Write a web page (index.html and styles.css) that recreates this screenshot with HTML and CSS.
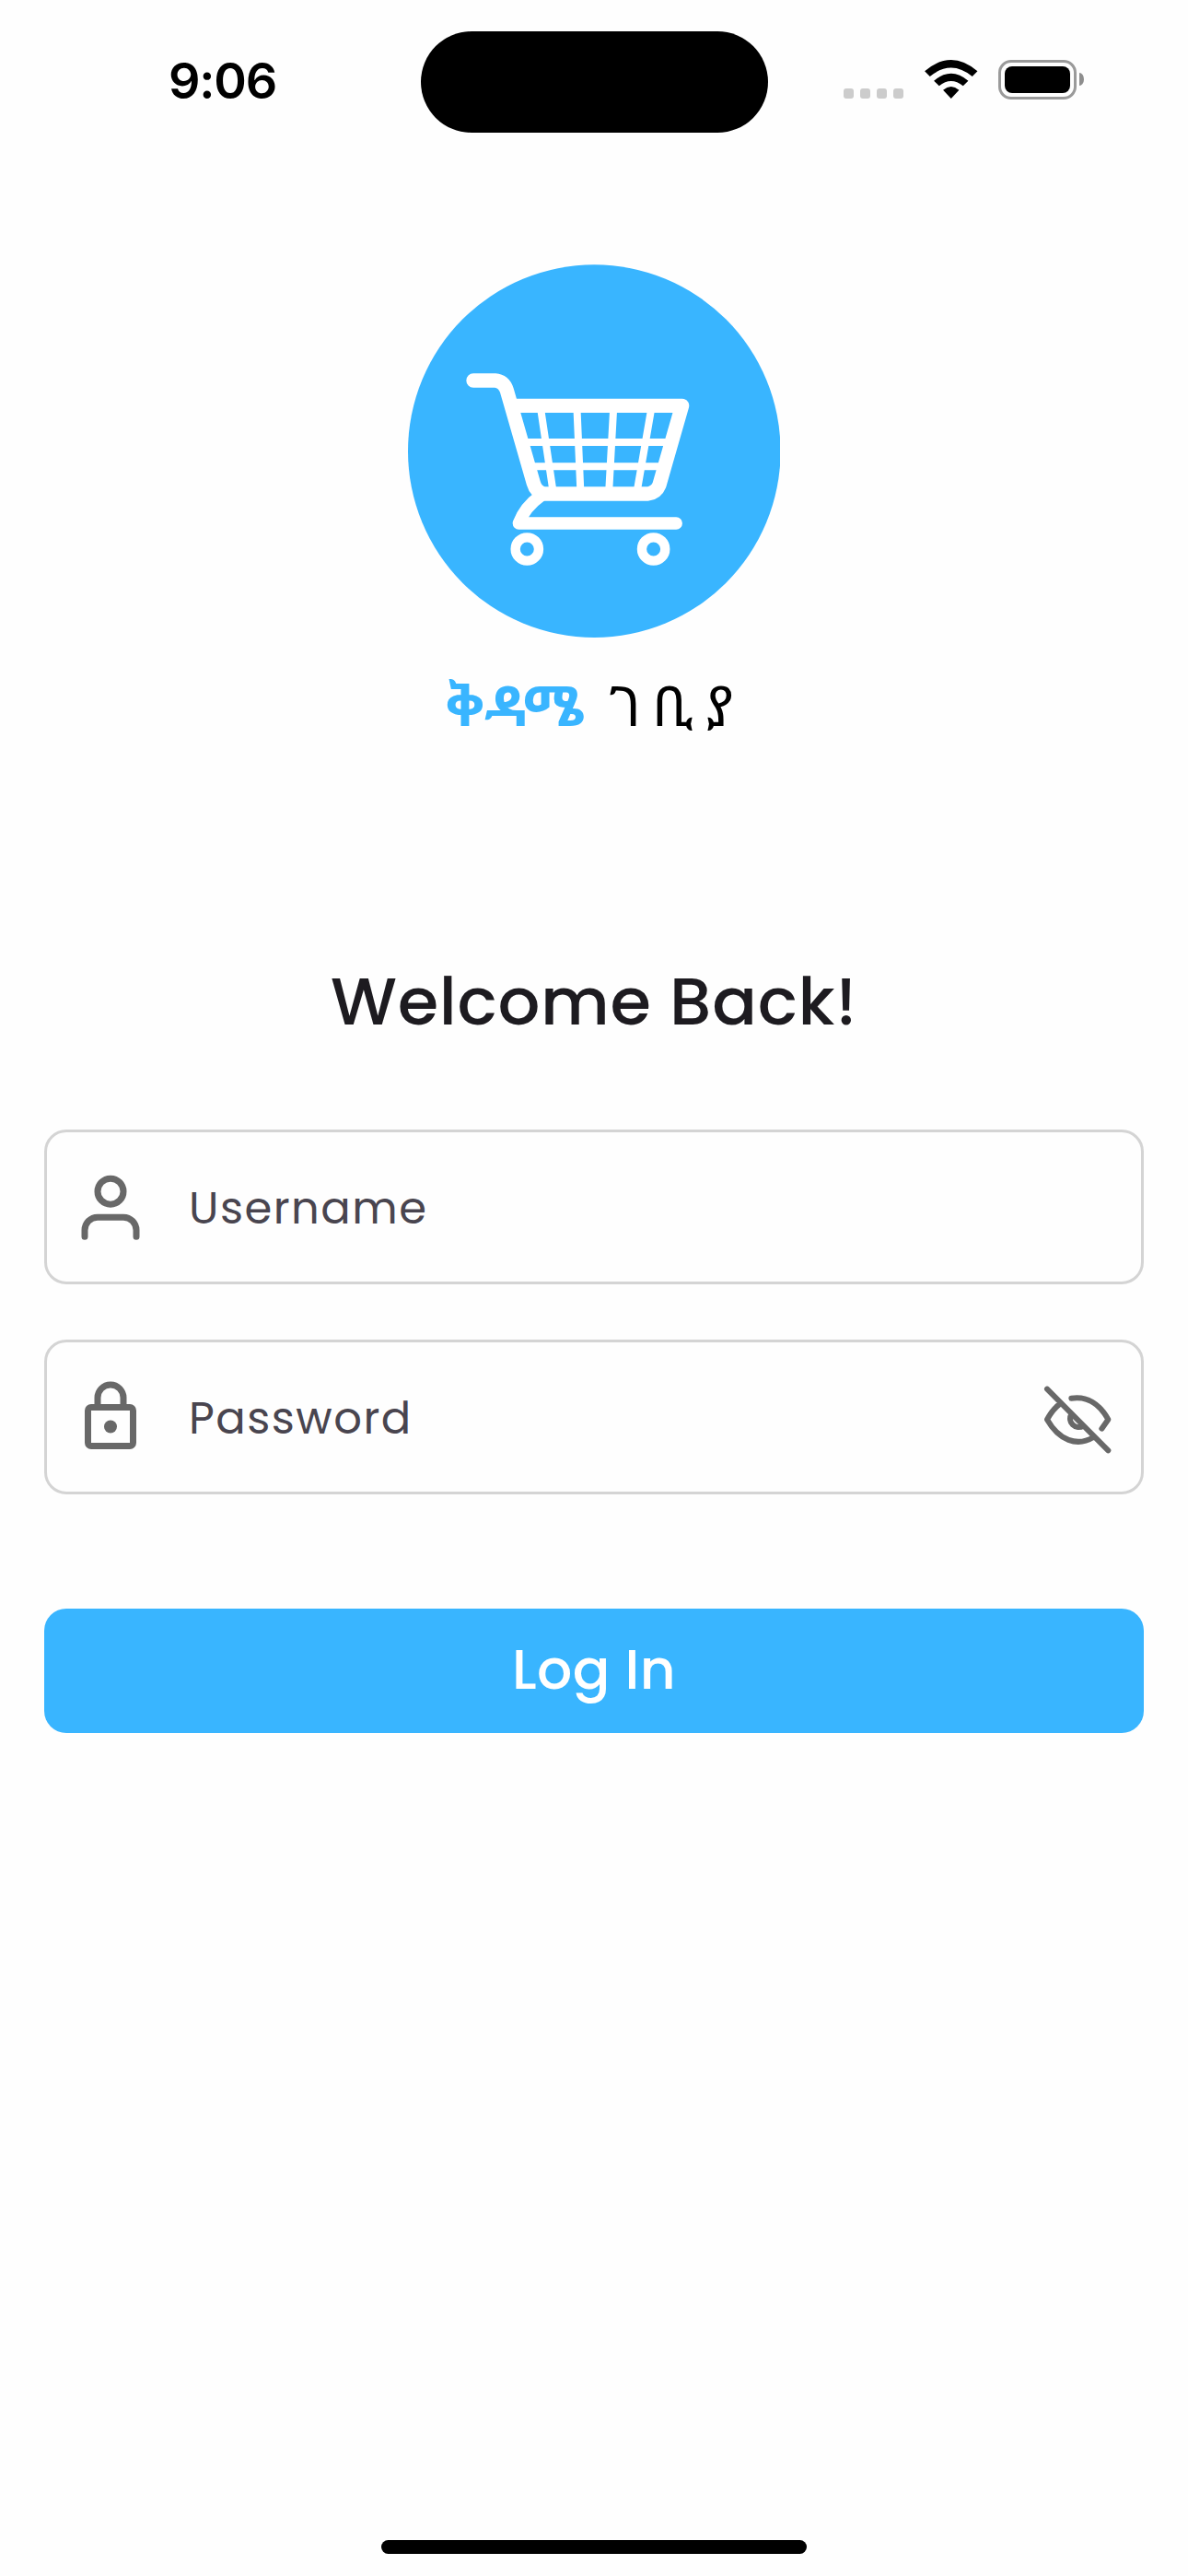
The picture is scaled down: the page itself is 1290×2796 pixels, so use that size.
FILE: index.html
```html
<!DOCTYPE html>
<html lang="en">
<head>
<meta charset="utf-8">
<title>Log In</title>
<link rel="stylesheet" href="styles.css">
</head>
<body>
<div class="screen">
  <header class="status">
    <div class="time">9:06</div>
    <div class="island"></div>
    <div class="indicators">
      <div class="dots"><i></i><i></i><i></i><i></i></div>
      <svg class="wifi" viewBox="0 0 172 126">
        <path d="M0 37Q86-37 172 37L155 54Q86-3 17 54Z"/>
        <path d="M30 68Q86 20 142 68L125 85Q86 53 47 85Z"/>
        <path d="M60 98Q86 76 112 98L86 126Z"/>
      </svg>
      <div class="battery"><div class="level"></div></div>
      <div class="cap"></div>
    </div>
  </header>

  <main>
    <div class="brand">
      <svg class="logo" viewBox="38 50 1214 1216">
        <circle cx="645" cy="658" r="607" fill="#39b5ff"/>
        <g fill="none" stroke="#fff" stroke-linejoin="round">
          <path stroke-width="46" stroke-linecap="round" d="M251 428H322Q350 430 360 460L447 762Q455 790 480 797H820Q847 793 857 768L931 510H385"/>
          <path stroke-width="24" d="M425 629H890M440 708H870M472 530L510 785M589 530L600 785M707 530L693 785M829 530L785 785"/>
          <path stroke-width="40" stroke-linecap="round" d="M912 893H399Q419 840 470 804"/>
          <circle cx="426" cy="977" r="38" stroke-width="31"/>
          <circle cx="838" cy="977" r="38" stroke-width="31"/>
        </g>
      </svg>
      <div class="name"><b>ቅዳሜ</b><span>ገቢያ</span></div>
    </div>

    <h1>Welcome Back!</h1>

    <form>
      <label class="field">
        <svg class="icon" viewBox="0 0 24 24">
          <circle cx="12" cy="7.2" r="4"/>
          <path d="M4 21.2V19.2A4 4 0 0 1 8 15.2H16A4 4 0 0 1 20 19.2V21.2"/>
        </svg>
        <span>Username</span>
      </label>
      <label class="field">
        <svg class="icon" viewBox="0 0 24 24">
          <path d="M8 8.5V6A4 4 0 0 1 16 6V8.5"/>
          <path class="solid" fill-rule="evenodd" d="M6 8H18A2 2 0 0 1 20 10V20A2 2 0 0 1 18 22H6A2 2 0 0 1 4 20V10A2 2 0 0 1 6 8ZM6 10V20H18V10Z"/>
          <circle class="solid" cx="12" cy="15" r="2"/>
        </svg>
        <span>Password</span>
        <svg class="icon eye" viewBox="114 168 252 252">
          <path d="M141 203L340 403M220 233C270 225 312 251 340 302L319 332M182 252Q160 268 141 302C180 370 238 392 292 360M220 285A28 28 0 0 0 259 323"/>
        </svg>
      </label>
      <button type="button">Log In</button>
    </form>
  </main>
  <div class="home"></div>
</div>
</body>
</html>
```
FILE: styles.css
```css
* { box-sizing: border-box; }
body { margin: 0; background: #fefefe; font-family: Poppins, Inter, "Liberation Sans", sans-serif; }
.screen { width: 1290px; height: 2796px; display: flex; flex-direction: column; }
.status { height: 177px; display: grid; grid-template-columns: 456.5px 377px 456.5px; align-items: start; }
.time { padding: 55px 0 0 183px; font: 600 54px/66px Inter, sans-serif; letter-spacing: -1.2px; color: #000; }
.island { height: 110.5px; margin-top: 33.5px; border-radius: 55.5px; background: #000; }
.indicators { display: flex; padding: 65px 0 0 82.5px; }
.dots { display: flex; gap: 7px; padding-top: 31px; width: 88px; }
.dots i { width: 11px; height: 11px; border-radius: 3px; background: #ccc; }
.wifi { width: 57.5px; height: 42px; margin-right: 22.5px; }
.battery { width: 85px; height: 43px; padding: 4px; border: 3px solid #9a9a9a; border-radius: 14px; }
.level { height: 29px; border-radius: 8px; background: #000; }
.cap { width: 5px; height: 14px; margin: 14px 0 0 3px; border-radius: 0 5px 5px 0 / 0 7px 7px 0; background: #8e8e8e; }
main { flex: 1; padding: 109.7px 48px 0; }
.brand { height: 740px; display: flex; flex-direction: column; align-items: center; }
.logo { width: 404.6px; height: 405.3px; }
.name { display: flex; margin-top: 33px; height: 80px; width: 322px; gap: 27px; font: 400 60px/80px "Noto Sans Ethiopic", "Noto Sans", sans-serif; color: #000; white-space: nowrap; }
.name b { color: #39b5ff; font-weight: 700; }
.name span { letter-spacing: 12.5px; }
h1 { margin: 0; height: 199px; padding-top: 18px; text-align: center; font-size: 72px; line-height: 84px; font-weight: 500; letter-spacing: 0.7px; color: #1d1b20; }
.field { display: flex; align-items: center; height: 168px; margin-bottom: 60px; padding: 0 27px; border: 3px solid #d4d4d4; border-radius: 24px; font-size: 48px; line-height: 60px; color: #49454f; }
.field span { margin-left: 43px; padding-top: 4px; letter-spacing: 1.5px; }
.icon { width: 84px; height: 84px; fill: none; stroke: #686868; stroke-width: 2; stroke-linecap: round; stroke-linejoin: round; }
.icon .solid { fill: #686868; stroke: none; }
.eye { margin-left: auto; stroke-width: 18; }
button { display: block; width: 100%; height: 135px; margin-top: 124.5px; padding: 0 0 3px; border: 0; border-radius: 24px; background: #39b5ff; color: #fff; font: 500 60px/70px Poppins, Inter, sans-serif; letter-spacing: 0.3px; }
.home { width: 462px; height: 15px; margin: 0 auto 24px; border-radius: 8px; background: #000; }
```
